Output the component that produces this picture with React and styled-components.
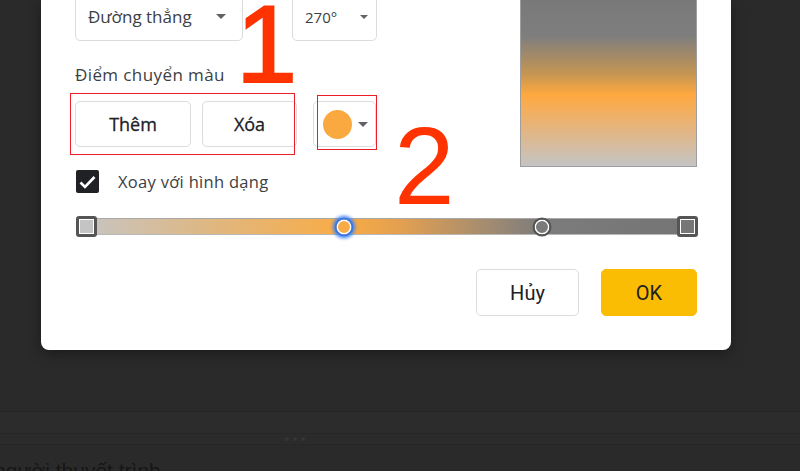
import React from 'react';
import styled, { createGlobalStyle } from 'styled-components';

const GlobalStyle = createGlobalStyle`
  html, body {
    margin: 0;
    padding: 0;
    background: #2a2a2a;
  }
  * { box-sizing: border-box; }
`;

const stops = [
  { pos: 43, color: '#f9ac45', active: true },
  { pos: 75, color: '#7a7a7a', active: false },
];

function Caret({ size = 10 }) {
  return (
    <svg width={size} height={size / 2} viewBox="0 0 10 5">
      <path d="M0 0 L10 0 L5 5 Z" fill="#5f6368" />
    </svg>
  );
}

function App() {
  return (
    <Page>
      <GlobalStyle />
      <Dialog>
        <Top>
          <LeftCol>
            <SelectRow>
              <Select $w={168}>
                <span>Đường thẳng</span>
                <Caret />
              </Select>
              <Select $w={85} $small>
                <span>270°</span>
                <Caret size={8} />
              </Select>
            </SelectRow>
            <Label>Điểm chuyển màu</Label>
            <ButtonRow>
              <PlainButton $w={116}>Thêm</PlainButton>
              <PlainButton $w={95}>Xóa</PlainButton>
              <ColorButton>
                <Swatch />
                <Caret />
              </ColorButton>
            </ButtonRow>
            <CheckRow>
              <Checkbox>
                <svg width="17" height="14" viewBox="0 0 17 14">
                  <path d="M1.5 7.5 L6 12 L15.5 2" fill="none" stroke="#fff" strokeWidth="2.6" />
                </svg>
              </Checkbox>
              <CheckLabel>Xoay với hình dạng</CheckLabel>
            </CheckRow>
          </LeftCol>
          <Preview />
        </Top>
        <Slider>
          <Track />
          <EndHandle $pos={0} $fill="#c4c4c4" />
          {stops.map((s) => (
            <StopHandle key={s.pos} $pos={s.pos} $fill={s.color} $active={s.active} />
          ))}
          <EndHandle $pos={100} $fill="#777777" />
        </Slider>
        <Footer>
          <CancelButton>Hủy</CancelButton>
          <OkButton>OK</OkButton>
        </Footer>
        <Mark $x={29} $y={93} $w={225} $h={62} />
        <Mark $x={276} $y={95} $w={60} $h={55} />
        <Number $x={195} $y={-11} $size={110} $stroke={2}>1</Number>
        <Number $x={353} $y={112} $size={109}>2</Number>
      </Dialog>
      <Band />
      <Divider>
        <Dot />
        <Dot />
        <Dot />
      </Divider>
      <Notes>người thuyết trình</Notes>
    </Page>
  );
}

const Page = styled.div`
  width: 800px;
  height: 471px;
  overflow: hidden;
  background: #2a2a2a;
  font-family: "Open Sans", Roboto, sans-serif;
`;

const Dialog = styled.div`
  position: relative;
  margin-left: 41px;
  width: 690px;
  height: 350px;
  background: #fff;
  border-radius: 0 0 8px 8px;
  box-shadow: 0 4px 14px rgba(0, 0, 0, 0.35);
  padding: 0 34px;
`;

const Top = styled.div`
  display: flex;
  justify-content: space-between;
  align-items: flex-start;
`;

const LeftCol = styled.div`
  display: flex;
  flex-direction: column;
`;

const SelectRow = styled.div`
  display: flex;
  gap: 49px;
  margin-top: -8px;
`;

const Select = styled.div`
  width: ${(p) => p.$w}px;
  height: 49px;
  border: 1px solid #dadce0;
  border-radius: 5px;
  display: flex;
  align-items: center;
  justify-content: space-between;
  padding: 0 ${(p) => (p.$small ? 8 : 16)}px 0 12px;
  color: #3c4043;
  font-size: ${(p) => (p.$small ? 15 : 17)}px;
`;

const Label = styled.div`
  margin-top: 24px;
  height: 20px;
  line-height: 20px;
  font-size: 17px;
  color: #3c4043;
  letter-spacing: 0.4px;
`;

const ButtonRow = styled.div`
  display: flex;
  gap: 11px;
  margin-top: 16px;
  height: 46px;
`;

const PlainButton = styled.div`
  width: ${(p) => p.$w}px;
  height: 46px;
  border: 1px solid #dadce0;
  border-radius: 5px;
  display: flex;
  align-items: center;
  justify-content: center;
  font-size: 18px;
  font-weight: 500;
  color: #202124;
  -webkit-text-stroke: 0.3px #202124;
`;

const ColorButton = styled.div`
  width: 63px;
  height: 46px;
  margin-left: 5px;
  border: 1px solid #dadce0;
  border-radius: 5px;
  display: flex;
  align-items: center;
  gap: 6px;
  padding-left: 9px;
`;

const Swatch = styled.div`
  width: 29px;
  height: 29px;
  border-radius: 50%;
  background: #faa940;
`;

const CheckRow = styled.div`
  display: flex;
  align-items: center;
  gap: 19px;
  margin-top: 23px;
  height: 23px;
`;

const Checkbox = styled.div`
  width: 23px;
  height: 23px;
  margin-left: 1px;
  border-radius: 2px;
  background: #202124;
  display: flex;
  align-items: center;
  justify-content: center;
`;

const CheckLabel = styled.div`
  font-size: 16.5px;
  color: #3c4043;
  letter-spacing: 0.3px;
`;

const Preview = styled.div`
  width: 177px;
  height: 180px;
  margin-top: -13px;
  border: 1px solid #9e9e9e;
  background: linear-gradient(
    to bottom,
    #777777 0%,
    #7e7e7e 27%,
    #c49553 48%,
    #ffa940 60%,
    #e6b47c 78%,
    #c4c4c4 100%
  );
`;

const Slider = styled.div`
  position: relative;
  margin-top: 25px;
  height: 17px;
  margin-left: 2px;
`;

const Track = styled.div`
  height: 17px;
  border-top: 1px solid #a8a8a8;
  border-bottom: 1px solid #b8b8b8;
  background: linear-gradient(
    to right,
    #c6c6c6 0%,
    #ddb886 20%,
    #f9ac45 43%,
    #e4a050 52%,
    #a48c70 66%,
    #7c7c7c 75%,
    #747474 100%
  );
`;

const EndHandle = styled.div`
  position: absolute;
  top: -2px;
  left: ${(p) => p.$pos}%;
  transform: translateX(${(p) => (p.$pos === 0 ? '-1px' : 'calc(-100% + 1px)')});
  width: 21px;
  height: 21px;
  border: 3px solid #555;
  border-radius: 3px;
  background: #fff;
  padding: 1px;
  &::after {
    content: '';
    display: block;
    width: 100%;
    height: 100%;
    background: ${(p) => p.$fill};
  }
`;

const StopHandle = styled.div`
  position: absolute;
  top: 50%;
  left: ${(p) => p.$pos}%;
  transform: translate(-50%, -50%);
  width: 19px;
  height: 19px;
  border-radius: 50%;
  border: 2px solid ${(p) => (p.$active ? '#3b78e7' : '#555')};
  background: ${(p) => p.$fill};
  box-shadow: inset 0 0 0 1.5px #fff
    ${(p) => (p.$active ? ', 0 0 3px 2px rgba(66, 133, 244, 0.8)' : '')};
`;

const Footer = styled.div`
  display: flex;
  justify-content: flex-end;
  gap: 22px;
  margin-top: 34px;
`;

const CancelButton = styled.div`
  width: 103px;
  height: 47px;
  border: 1px solid #dadce0;
  border-radius: 5px;
  display: flex;
  align-items: center;
  justify-content: center;
  font-family: Roboto, sans-serif;
  font-size: 20px;
  color: #202124;
`;

const OkButton = styled(CancelButton)`
  width: 96px;
  border-color: #fbbc04;
  background: #fbbc04;
`;

const Mark = styled.div`
  position: absolute;
  left: ${(p) => p.$x}px;
  top: ${(p) => p.$y}px;
  width: ${(p) => p.$w}px;
  height: ${(p) => p.$h}px;
  border: 1.5px solid #ee1c24;
  pointer-events: none;
`;

const Number = styled.div`
  position: absolute;
  left: ${(p) => p.$x}px;
  top: ${(p) => p.$y}px;
  font-family: "Liberation Sans", Arial, sans-serif;
  font-size: ${(p) => p.$size}px;
  line-height: 1;
  color: #ff3300;
  -webkit-text-stroke: ${(p) => p.$stroke || 0}px #ff3300;
`;

const Band = styled.div`
  margin-top: 61px;
  height: 22px;
  border-top: 1px solid #252525;
  background: #2c2c2c;
`;

const Divider = styled.div`
  height: 12px;
  border-top: 1px solid #262626;
  border-bottom: 1px solid #262626;
  display: flex;
  justify-content: center;
  align-items: center;
  gap: 4px;
  padding-right: 210px;
  background: #2b2b2b;
`;

const Dot = styled.div`
  width: 4px;
  height: 4px;
  border-radius: 50%;
  background: #353535;
`;

const Notes = styled.div`
  margin-top: 14px;
  margin-left: -6px;
  font-family: "Liberation Sans", sans-serif;
  font-size: 21px;
  line-height: 24px;
  color: #161616;
`;

export default App;
